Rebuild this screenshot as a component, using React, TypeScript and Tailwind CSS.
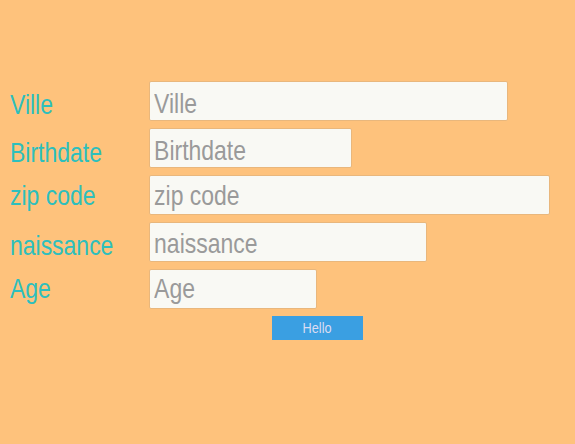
const fields = [
  { label: "Ville", w: "w-[359px]", iw: "w-[435px]", lp: "pt-[10px]", ip: "pt-[5px]" },
  { label: "Birthdate", w: "w-[203px]", iw: "w-[245px]", lp: "pt-[11px]", ip: "pt-[5px]" },
  { label: "zip code", w: "w-[401px]", iw: "w-[487px]", lp: "pt-[7px]", ip: "pt-[1px]" },
  { label: "naissance", w: "w-[278px]", iw: "w-[336px]", lp: "pt-[10px]", ip: "pt-[3px]" },
  { label: "Age", w: "w-[168px]", iw: "w-[202px]", lp: "pt-[6px]", ip: "pb-[1px]" },
];

export default function App() {
  return (
    <div className="w-[575px] h-[444px] bg-[#fec27c] pt-[81px] pl-[10px] font-['Liberation_Sans',Arial,sans-serif]">
      <form className="flex flex-col gap-[7px]" onSubmit={(e) => e.preventDefault()}>
        {fields.map((f) => (
          <div key={f.label} className="flex items-start">
            <label className={`w-[139px] ${f.lp}`}>
              <span className="block origin-left scale-x-[0.82] whitespace-nowrap text-[28px] leading-none text-[#2dbfbd]">
                {f.label}
              </span>
            </label>
            <div className={`${f.w} h-[40px] overflow-hidden bg-[#f9f9f4] border border-[#e9b77c] rounded-[2px]`}>
              <input
                placeholder={f.label}
                className={`${f.iw} h-full origin-left scale-x-[0.82] bg-transparent px-[5px] ${f.ip} text-[28px] text-[#999] placeholder:text-[#9a9a9a] outline-none`}
              />
            </div>
          </div>
        ))}
        <div className="pl-[262px]">
          <button className="w-[91px] h-[24px] bg-[#3a9fe2] text-[#dcdcf2] leading-none">
            <span className="inline-block scale-x-[0.85] text-[15px]">Hello</span>
          </button>
        </div>
      </form>
    </div>
  );
}
